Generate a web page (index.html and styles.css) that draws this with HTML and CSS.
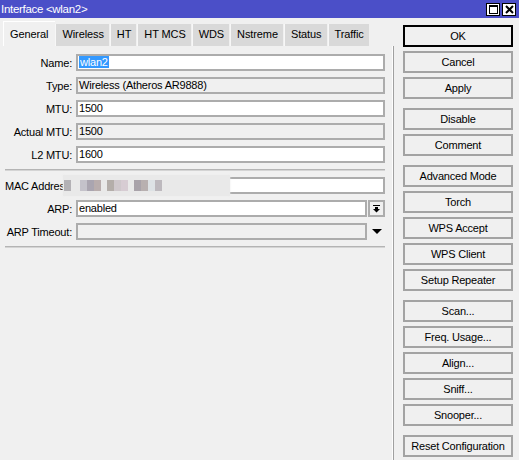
FILE: index.html
```html
<!DOCTYPE html>
<html lang="en">
<head>
    <meta charset="UTF-8">
    <title>Interface &lt;wlan2&gt;</title>
    <link rel="stylesheet" href="styles.css">
</head>
<body>
    <div class="window">
        <div class="titlebar">
            <span class="title">Interface &lt;wlan2&gt;</span>
            <div class="win-btns">
                <div class="win-btn">
                    <svg width="11" height="11" viewBox="0 0 11 11"><rect x="1.5" y="1.5" width="8" height="8" fill="none" stroke="#000" stroke-width="1"/><rect x="1" y="1" width="9" height="2" fill="#000"/></svg>
                </div>
                <div class="win-btn">
                    <svg width="11" height="11" viewBox="0 0 11 11"><path d="M2 2 L9 9 M9 2 L2 9" stroke="#000" stroke-width="2"/></svg>
                </div>
            </div>
        </div>

        <div class="main">
            <div class="left">
                <div class="tabs">
                    <div class="tab active">General</div>
                    <div class="tab">Wireless</div>
                    <div class="tab">HT</div>
                    <div class="tab">HT MCS</div>
                    <div class="tab">WDS</div>
                    <div class="tab">Nstreme</div>
                    <div class="tab">Status</div>
                    <div class="tab">Traffic</div>
                </div>

                <div class="panel">
                    <div class="row">
                        <div class="label">Name:</div>
                        <div class="field"><span class="selected">wlan2</span></div>
                    </div>
                    <div class="row">
                        <div class="label">Type:</div>
                        <div class="field readonly">Wireless (Atheros AR9888)</div>
                    </div>
                    <div class="row">
                        <div class="label">MTU:</div>
                        <div class="field">1500</div>
                    </div>
                    <div class="row">
                        <div class="label">Actual MTU:</div>
                        <div class="field readonly">1500</div>
                    </div>
                    <div class="row">
                        <div class="label">L2 MTU:</div>
                        <div class="field">1600</div>
                    </div>

                    <div class="sep"></div>

                    <div class="row">
                        <div class="label long">MAC Address:</div>
                        <div class="field"></div>
                        <!-- blurred mac -->
                        <div class="blur">
                            <span class="px" style="background:#b3b1b5"></span>
                            <span class="gap1"></span>
                            <span class="grp">
                                <span class="px" style="background:#c4c2ca"></span><span class="px" style="background:#aaa5b0"></span><span class="px" style="background:#b9adad"></span>
                            </span>
                            <span class="grp">
                                <span class="px" style="background:#b4aeaa"></span><span class="px" style="background:#cfc8cc"></span><span class="px" style="background:#d7ccd3"></span>
                            </span>
                            <span class="grp">
                                <span class="px" style="background:#a9a3aa"></span><span class="px" style="background:#b8b0b0"></span><span class="px" style="background:#dde2e5"></span><span class="px" style="background:#bdb9be"></span>
                            </span>
                        </div>
                    </div>
                    <div class="row">
                        <div class="label">ARP:</div>
                        <div class="field short">enabled</div>
                        <div class="drop-btn">
                            <svg width="7" height="8" viewBox="0 0 7 8"><rect x="0" y="0" width="7" height="1" fill="#000"/><rect x="2" y="2" width="3" height="2" fill="#000"/><path d="M0 4 H7 L3.5 7.5 Z" fill="#000"/></svg>
                        </div>
                    </div>
                    <div class="row">
                        <div class="label">ARP Timeout:</div>
                        <div class="field short readonly"></div>
                        <div class="drop-arrow">
                            <svg width="10" height="6" viewBox="0 0 10 6"><path d="M0 0 H10 L5 5 Z" fill="#000"/></svg>
                        </div>
                    </div>

                    <div class="sep"></div>
                </div>
            </div>

            <div class="buttons">
                <div class="group">
                    <div class="btn default">OK</div>
                    <div class="btn">Cancel</div>
                    <div class="btn">Apply</div>
                </div>
                <div class="group">
                    <div class="btn">Disable</div>
                    <div class="btn">Comment</div>
                </div>
                <div class="group">
                    <div class="btn">Advanced Mode</div>
                    <div class="btn">Torch</div>
                    <div class="btn">WPS Accept</div>
                    <div class="btn">WPS Client</div>
                    <div class="btn">Setup Repeater</div>
                </div>
                <div class="group">
                    <div class="btn">Scan...</div>
                    <div class="btn">Freq. Usage...</div>
                    <div class="btn">Align...</div>
                    <div class="btn">Sniff...</div>
                    <div class="btn">Snooper...</div>
                </div>
                <div class="group last">
                    <div class="btn">Reset Configuration</div>
                </div>
            </div>
        </div>
    </div>
</body>
</html>
```

FILE: styles.css
```css
* {
    margin: 0;
    padding: 0;
    box-sizing: border-box;
}

body {
    background: #f0f0f0;
    font-family: "Liberation Sans", Arial, sans-serif;
    font-size: 11px;
    color: #000;
}

.window {
    width: 519px;
    height: 460px;
    overflow: hidden;
    background: #f0f0f0;
}

.titlebar {
    height: 18px;
    background: #4b4fc8;
    color: #fff;
    display: flex;
    align-items: center;
    justify-content: space-between;
    padding: 0 3px 0 1px;
}

.title {
    font-size: 11.5px;
    letter-spacing: -0.3px;
}

.win-btns {
    display: flex;
    gap: 2px;
}

.win-btn {
    width: 14px;
    height: 13px;
    background: #fff;
    border: 1px solid #000;
    display: flex;
    align-items: center;
    justify-content: center;
}

.main {
    display: flex;
    height: 442px;
}

.left {
    width: 394px;
    display: flex;
    flex-direction: column;
}

.tabs {
    display: flex;
    align-items: flex-end;
    height: 28px;
    padding-left: 3px;
}

.tab {
    height: 22px;
    line-height: 21px;
    padding: 0 5px 0 6px;
    margin-right: 1px;
    background: #d9d9d9;
    border-left: 1px solid #f7f7f7;
    white-space: nowrap;
    letter-spacing: -0.1px;
}

.tab.active {
    height: 25px;
    line-height: 24px;
    padding: 0 7px 0 6px;
    background: #f0f0f0;
    border-left: 1px solid #fff;
    border-top: 1px solid #fff;
    margin-right: 0;
}

.panel {
    flex: 1;
    padding-top: 8px;
    border-right: 1px solid #a0a0a0;
    box-shadow: inset -1px 0 0 #fdfdfd;
}

.row {
    position: relative;
    display: flex;
    align-items: center;
    height: 17px;
    margin-bottom: 6px;
}

.label {
    width: 72px;
    margin-right: 4px;
    text-align: right;
    white-space: nowrap;
    letter-spacing: -0.2px;
}

.label.long {
    text-align: left;
    padding-left: 5px;
    overflow: hidden;
}

.field {
    width: 309px;
    height: 17px;
    border: 2px solid #acacac;
    background: #fff;
    line-height: 13px;
    padding-left: 1px;
    white-space: nowrap;
    overflow: hidden;
    letter-spacing: -0.2px;
}

.field.readonly {
    background: #f0f0f0;
}

.field.short {
    width: 291px;
}

.selected {
    background: #3399ff;
    color: #fff;
    padding: 0 1px;
}

.drop-btn {
    width: 17px;
    height: 17px;
    margin-left: 1px;
    border: 2px solid #acacac;
    background: #f0f0f0;
    display: flex;
    align-items: center;
    justify-content: center;
}

.drop-arrow {
    width: 18px;
    display: flex;
    justify-content: center;
    padding-left: 2px;
}

.sep {
    width: 380px;
    height: 2px;
    margin: 0 0 6px 5px;
    border-top: 1px solid #b4b4b4;
    border-bottom: 1px solid #d4d4d4;
}

.blur {
    position: absolute;
    left: 63px;
    top: -2px;
    width: 167px;
    height: 21px;
    background: #e9e9e9;
    box-shadow: 0 0 2px #ececec;
    display: flex;
    align-items: center;
    padding-left: 1px;
}

.blur .px {
    display: inline-block;
    width: 7px;
    height: 11px;
}

.gap1 {
    width: 9px;
}

.grp {
    display: flex;
    margin-right: 6px;
}

.buttons {
    width: 110px;
    margin-left: 9px;
    padding-top: 7px;
}

.group {
    display: flex;
    flex-direction: column;
    gap: 4px;
    margin-bottom: 9px;
}

.btn {
    height: 22px;
    border: 2px solid #a3a3a3;
    background: #f0f0f0;
    text-align: center;
    line-height: 18px;
    white-space: nowrap;
    letter-spacing: -0.2px;
}

.btn.default {
    border-color: #000;
}

.group.last {
    margin-top: 1px;
}
```
